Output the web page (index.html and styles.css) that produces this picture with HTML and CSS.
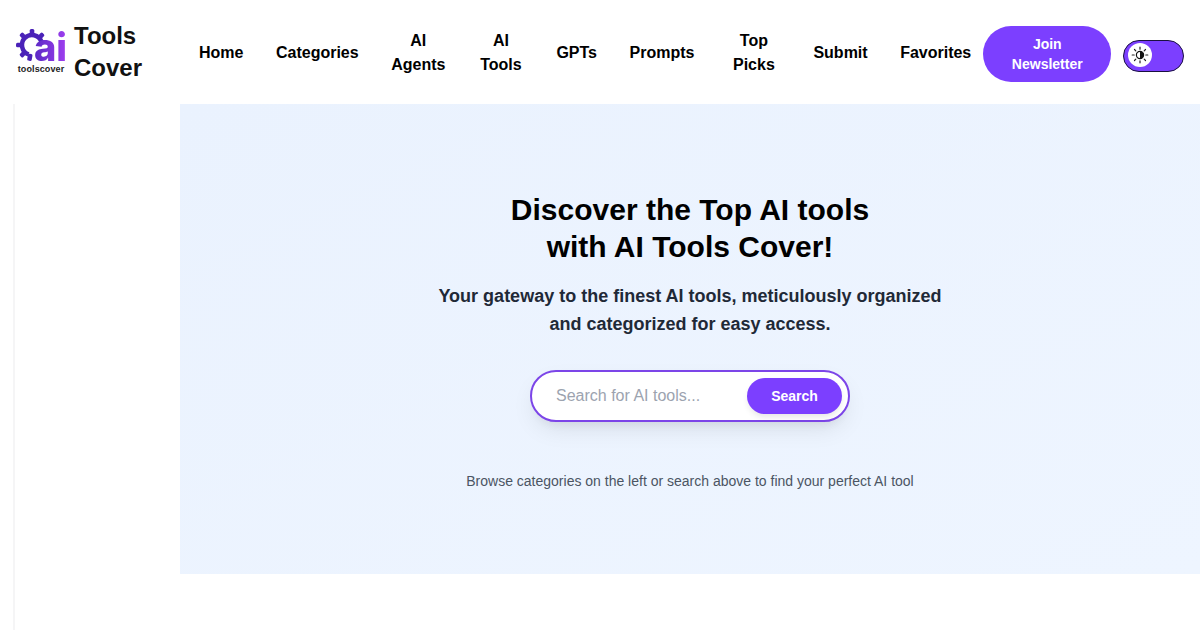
FILE: index.html
```html
<!DOCTYPE html>
<html lang="en">
<head>
    <meta charset="UTF-8">
    <meta name="viewport" content="width=device-width, initial-scale=1.0">
    <title>AI Tools Cover</title>
    <link rel="stylesheet" href="styles.css">
</head>
<body>

<header class="site-header">
    <a class="brand" href="#">
        <span class="logo">
            <span class="logo-mark">
                <svg class="logo-gear" width="32" height="32" viewBox="0 0 32 32">
                    <g fill="#4a22b8">
                        <rect x="13.7" y="0" width="4.6" height="7" rx="1.5" transform="rotate(45 16 16)"/>
                        <rect x="13.7" y="0" width="4.6" height="7" rx="1.5"/>
                        <rect x="13.7" y="0" width="4.6" height="7" rx="1.5" transform="rotate(-45 16 16)"/>
                        <rect x="13.7" y="0" width="4.6" height="7" rx="1.5" transform="rotate(-90 16 16)"/>
                        <rect x="13.7" y="0" width="4.6" height="7" rx="1.5" transform="rotate(-135 16 16)"/>
                        <rect x="13.7" y="0" width="4.6" height="7" rx="1.5" transform="rotate(-170 16 16)"/>
                    </g>
                    <path d="M25.4 12.6A10 10 0 1 0 12.6 25.4" fill="none" stroke="#4a22b8" stroke-width="4.5"/>
                </svg>
                <span class="logo-ai">ai</span>
            </span>
            <span class="logo-name">toolscover</span>
        </span>
        <span class="brand-text">Tools<br>Cover</span>
    </a>

    <nav class="main-nav">
        <a href="#">Home</a>
        <a href="#">Categories</a>
        <a href="#">AI<br>Agents</a>
        <a href="#" class="nav-tools">AI<br>Tools</a>
        <a href="#">GPTs</a>
        <a href="#">Prompts</a>
        <a href="#" class="nav-picks">Top<br>Picks</a>
        <a href="#">Submit</a>
        <a href="#">Favorites</a>
    </nav>

    <button class="join-btn">Join<br>Newsletter</button>

    <div class="theme-toggle">
        <span class="toggle-knob">
            <svg width="18" height="18" viewBox="0 0 18 18">
                <circle cx="9" cy="9" r="3.6" fill="#fff" stroke="#111" stroke-width="1.2"/>
                <path d="M9 5.4a3.6 3.6 0 0 1 0 7.2z" fill="#111"/>
                <path d="M9 1.2v2M9 14.8v2M1.2 9h2M14.8 9h2M3.5 3.5l1.3 1.3M13.2 13.2l1.3 1.3M3.5 14.5l1.3-1.3M13.2 4.8l1.3-1.3" stroke="#222" stroke-width="1.2" stroke-linecap="round"/>
            </svg>
        </span>
    </div>
</header>

<div class="page">
    <aside class="sidebar"></aside>

    <main class="hero">
        <h1>Discover the Top AI tools<br>with AI Tools Cover!</h1>
        <p class="hero-sub">Your gateway to the finest AI tools, meticulously organized<br>and categorized for easy access.</p>

        <form class="search-box">
            <input type="text" class="search-input" placeholder="Search for AI tools...">
            <button type="button" class="search-btn">Search</button>
        </form>

        <p class="hero-note">Browse categories on the left or search above to find your perfect AI tool</p>
    </main>
</div>

</body>
</html>
```

FILE: styles.css
```css
* {
    box-sizing: border-box;
}
body {
    font-family: "Liberation Sans", Arial, sans-serif;
    margin: 0;
    padding: 0;
    background-color: #fff;
    color: #000;
    height: 630px;
    overflow: hidden;
}
a {
    color: inherit;
    text-decoration: none;
}

/* header */
.site-header {
    display: flex;
    align-items: center;
    height: 104px;
    padding: 0 16px;
}
.brand {
    display: flex;
    align-items: center;
    gap: 8px;
    width: 167px;
    flex-shrink: 0;
}
.logo {
    display: flex;
    flex-direction: column;
    align-items: center;
    width: 50px;
    margin-bottom: 2px;
}
.logo-mark {
    position: relative;
    display: block;
    width: 50px;
    height: 35px;
}
.logo-gear {
    position: absolute;
    left: 0;
    top: 0;
}
.logo-ai {
    position: absolute;
    right: -1px;
    top: 2px;
    font-family: "Inter", sans-serif;
    font-size: 38px;
    line-height: 33px;
    font-weight: 800;
    background: linear-gradient(90deg, #5a28c4, #a03ff0);
    -webkit-background-clip: text;
    background-clip: text;
    color: transparent;
}
.logo-name {
    font-size: 9px;
    line-height: 10px;
    font-weight: 700;
    letter-spacing: 0.1px;
    color: #222;
    white-space: nowrap;
}
.brand-text {
    font-size: 24px;
    line-height: 32px;
    font-weight: 700;
    color: #111;
}
.main-nav {
    display: flex;
    align-items: center;
    gap: 32.5px;
    margin: 2px 0 0 16px;
    flex-shrink: 0;
}
.main-nav a {
    font-size: 16px;
    line-height: 24px;
    font-weight: 700;
    text-align: center;
}
.main-nav .nav-tools {
    width: 46px;
}
.main-nav .nav-picks {
    width: 54px;
}
.join-btn {
    width: 128px;
    height: 56px;
    margin: 4px 0 0 12px;
    flex-shrink: 0;
    border: none;
    border-radius: 28px;
    background-color: #7c3fff;
    color: #fff;
    font-family: inherit;
    font-size: 14px;
    line-height: 20px;
    font-weight: 700;
}
.theme-toggle {
    display: flex;
    align-items: center;
    width: 61px;
    height: 32px;
    margin: 8px 0 0 12px;
    padding: 0 0 2px 4px;
    flex-shrink: 0;
    background-color: #7c3fff;
    border: 1px solid #1a1040;
    border-radius: 16px;
}
.toggle-knob {
    display: flex;
    align-items: center;
    justify-content: center;
    width: 24px;
    height: 24px;
    background-color: #fff;
    border-radius: 50%;
}

/* page body */
.page {
    display: flex;
    align-items: flex-start;
    height: 526px;
    padding-left: 13px;
}
.sidebar {
    width: 167px;
    height: 526px;
    flex-shrink: 0;
    border-left: 2px solid #f5f5f6;
}
.hero {
    flex: 1;
    height: 470px;
    padding-top: 87px;
    background: linear-gradient(to bottom right, #eaf2fe, #eef5ff);
    display: flex;
    flex-direction: column;
    align-items: center;
    text-align: center;
}
.hero h1 {
    margin: 0;
    font-size: 30px;
    line-height: 37px;
    font-weight: 700;
    color: #000;
}
.hero-sub {
    margin: 17px 0 0;
    font-size: 18px;
    line-height: 28px;
    font-weight: 700;
    color: #1f2937;
}
.search-box {
    display: flex;
    align-items: center;
    justify-content: space-between;
    width: 320px;
    height: 52px;
    margin-top: 32px;
    padding: 0 6px 0 24px;
    background-color: #fff;
    border: 2px solid #7c45e8;
    border-radius: 26px;
    box-shadow: 0 10px 25px -5px rgba(0, 0, 0, 0.1), 0 8px 10px -6px rgba(0, 0, 0, 0.06);
}
.search-input {
    width: 180px;
    border: none;
    outline: none;
    padding: 0;
    background: transparent;
    font-family: inherit;
    font-size: 16px;
    color: #111;
}
.search-input::placeholder {
    color: #9ca3af;
}
.search-btn {
    width: 95px;
    height: 36px;
    border: none;
    border-radius: 18px;
    background-color: #7c3fff;
    color: #fff;
    font-family: inherit;
    font-size: 14px;
    font-weight: 700;
    box-shadow: 0 4px 6px -1px rgba(0, 0, 0, 0.1);
}
.hero-note {
    margin: 49px 0 0;
    font-size: 14px;
    line-height: 20px;
    color: #4b5563;
}
```
